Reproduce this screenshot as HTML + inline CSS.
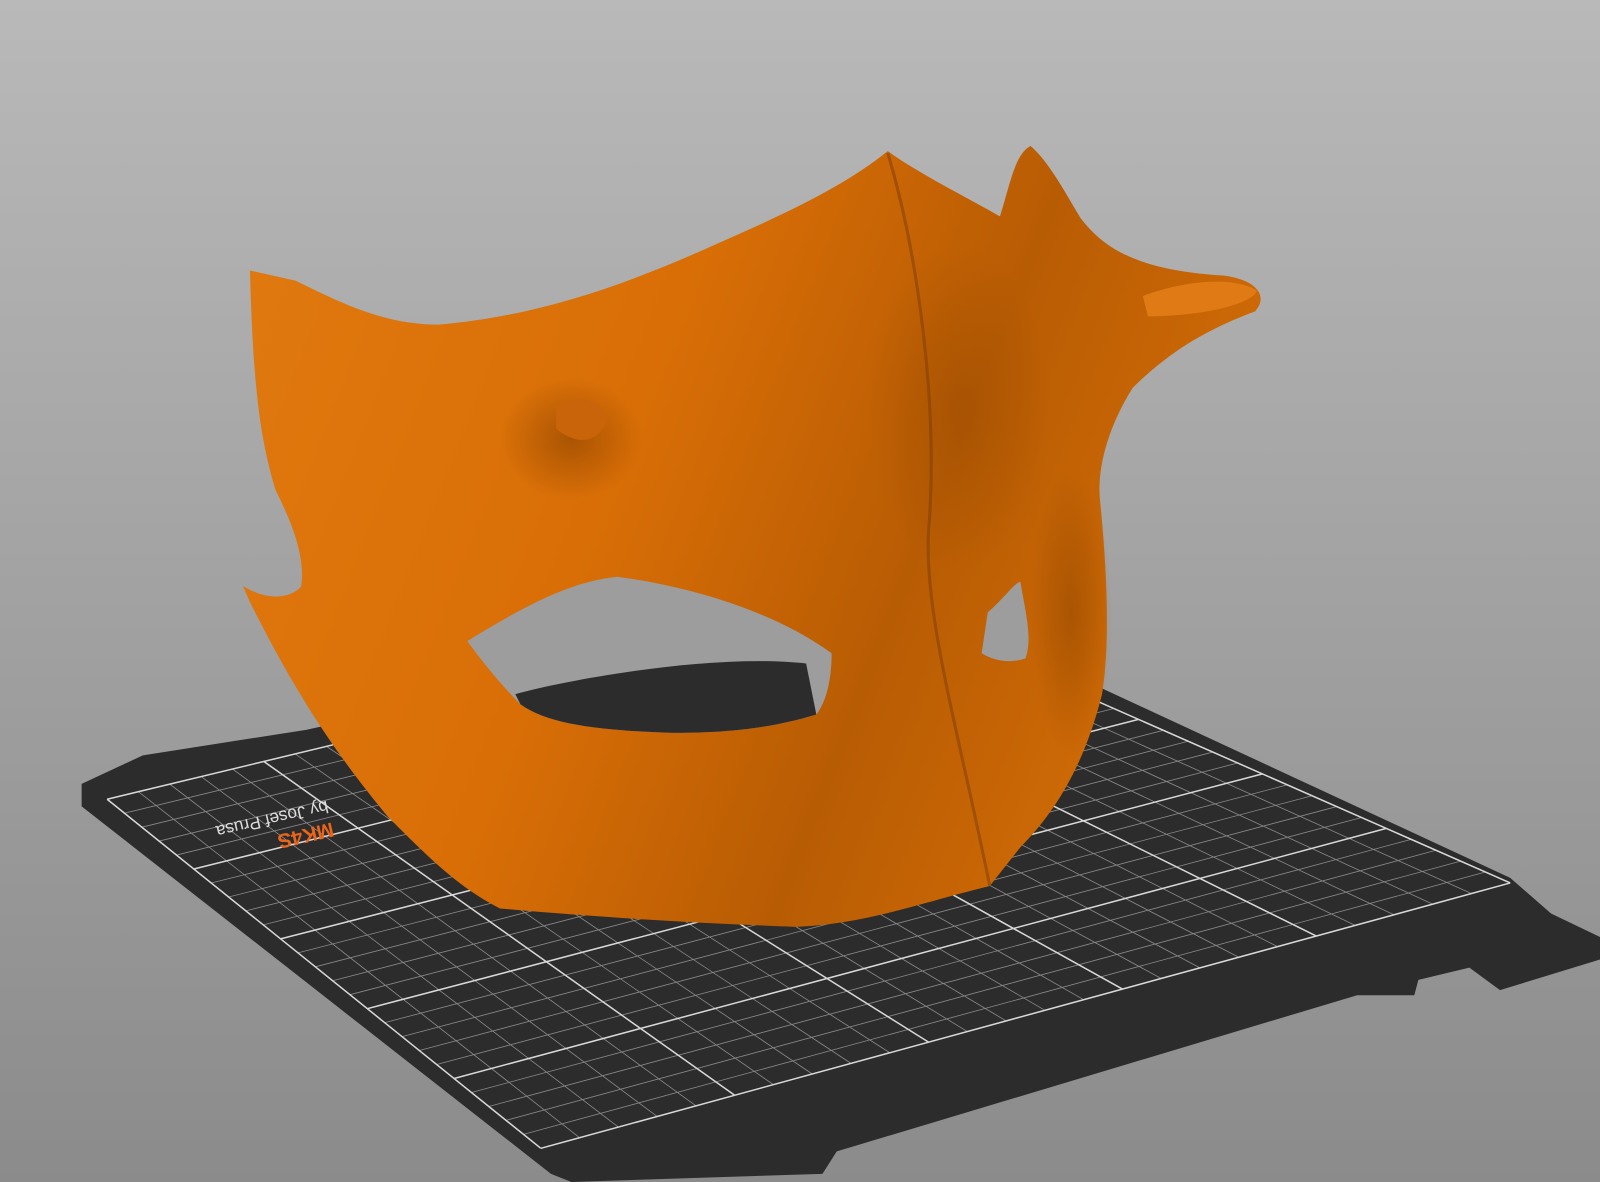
<!DOCTYPE html>
<html><head><meta charset="utf-8"><style>
html,body{margin:0;padding:0;width:1600px;height:1182px;overflow:hidden}
svg{display:block}
</style></head><body>
<svg id="s" width="1600" height="1182" viewBox="0 0 1568 1158" preserveAspectRatio="none" xmlns="http://www.w3.org/2000/svg">
<defs>
<linearGradient id="bg" x1="0" y1="0" x2="0" y2="1">
<stop offset="0" stop-color="#b9b9b9"/><stop offset="1" stop-color="#8b8b8b"/></linearGradient>
<linearGradient id="or" x1="0" y1="0" x2="1" y2="0.3">
<stop offset="0" stop-color="#e07a10"/><stop offset="0.45" stop-color="#d96e06"/><stop offset="0.75" stop-color="#b85c04"/><stop offset="1" stop-color="#cf6a06"/></linearGradient>
<radialGradient id="sh1" cx="0.5" cy="0.5" r="0.5"><stop offset="0" stop-color="#8a4200" stop-opacity="0.6"/><stop offset="1" stop-color="#8a4200" stop-opacity="0"/></radialGradient>
</defs>
<rect width="1568" height="1158" fill="url(#bg)"/>
<polygon fill="#2c2c2c" points="80,768 140,740 300,715 770,612 980,628 1480,860 1520,895 1568,918 1568,940 1470,970 1440,948 1390,960 1386,975 1330,975 820,1128 806,1150 560,1158 540,1150 80,790"/>
<g id="grid" stroke="#8a8a8a" stroke-width="0.8" fill="none"></g>
<g id="gridM" stroke="#d8d8d8" stroke-width="1.5" fill="none"></g>
<g transform="translate(260,790) rotate(167)" font-family="Liberation Sans, sans-serif" font-weight="bold">
<text x="-60" y="-8" font-size="17" fill="#ddd" font-weight="normal">by Josef Prusa</text>
<text x="-60" y="-30" font-size="20" fill="#e8651a">MK4S</text>
</g>
<path fill="url(#or)" d="M245,265 L290,275 C340,300 380,318 430,318 C520,310 600,285 700,240 C780,205 830,180 870,148 C900,170 960,200 980,212 C990,180 995,150 1010,143 C1030,160 1050,200 1060,215 C1080,240 1110,265 1200,270 C1235,275 1242,292 1230,305 C1190,320 1150,340 1110,380 C1085,420 1075,460 1078,490 C1085,560 1088,630 1080,680 C1065,740 1040,790 1000,830 L970,868 C900,885 850,905 780,908 C700,905 600,900 490,890 C450,870 420,840 380,800 C330,740 290,680 245,590 L238,574 C255,585 280,590 295,575 C300,545 285,510 270,480 C255,430 248,380 245,265 Z"/>
<ellipse cx="560" cy="430" rx="70" ry="60" fill="url(#sh1)"/>
<ellipse cx="940" cy="400" rx="90" ry="160" fill="url(#sh1)" opacity="0.6"/>
<ellipse cx="1050" cy="600" rx="40" ry="140" fill="url(#sh1)" opacity="0.8"/>
<path fill="#c9640a" d="M545,400 C560,385 590,390 595,410 C590,430 570,440 545,420 Z"/>
<path fill="#e07a14" d="M1120,290 C1160,275 1210,270 1232,285 C1225,300 1170,310 1125,310 Z"/>
<path fill="#9d9d9d" d="M458,628 C520,590 560,570 605,565 C680,575 760,600 815,640 C815,670 808,690 800,700 C760,712 720,718 660,718 C600,716 540,712 510,690 C490,670 470,645 458,628 Z"/>
<g clip-path="url(#eye)"></g>
<path fill="#2c2c2c" d="M505,680 C560,665 700,640 790,650 L800,700 C760,712 720,718 660,718 C600,716 540,712 510,690 Z"/>
<path fill="#9d9d9d" d="M968,600 C985,585 995,570 1000,570 C1005,600 1012,625 1005,645 C990,650 975,648 962,640 Z"/>
<path stroke="#7a3c02" stroke-width="3" fill="none" opacity="0.5" d="M870,150 C900,250 920,400 910,520 C905,600 940,720 970,868"/>
</svg>
<script>
(function(){
var TL=[105,783],TR=[873,598],BR=[1480,865],BL=[530,1125];
function P(u,v){var x=(1-u)*(1-v)*TL[0]+u*(1-v)*TR[0]+u*v*BR[0]+(1-u)*v*BL[0];var y=(1-u)*(1-v)*TL[1]+u*(1-v)*TR[1]+u*v*BR[1]+(1-u)*v*BL[1];return x.toFixed(1)+","+y.toFixed(1);}
var g=document.getElementById("grid"),gm=document.getElementById("gridM"),ns="http://www.w3.org/2000/svg",N=25;
for(var i=0;i<=N;i++){var t=i/N;var tg=(i%5==0)?gm:g;
var a=document.createElementNS(ns,"polyline");a.setAttribute("points",P(t,0)+" "+P(t,1));tg.appendChild(a);
var b=document.createElementNS(ns,"polyline");b.setAttribute("points",P(0,t)+" "+P(1,t));tg.appendChild(b);}
var s=document.getElementById("s");s.insertBefore(gm,g.nextSibling);
})();
</script>
</body></html>
